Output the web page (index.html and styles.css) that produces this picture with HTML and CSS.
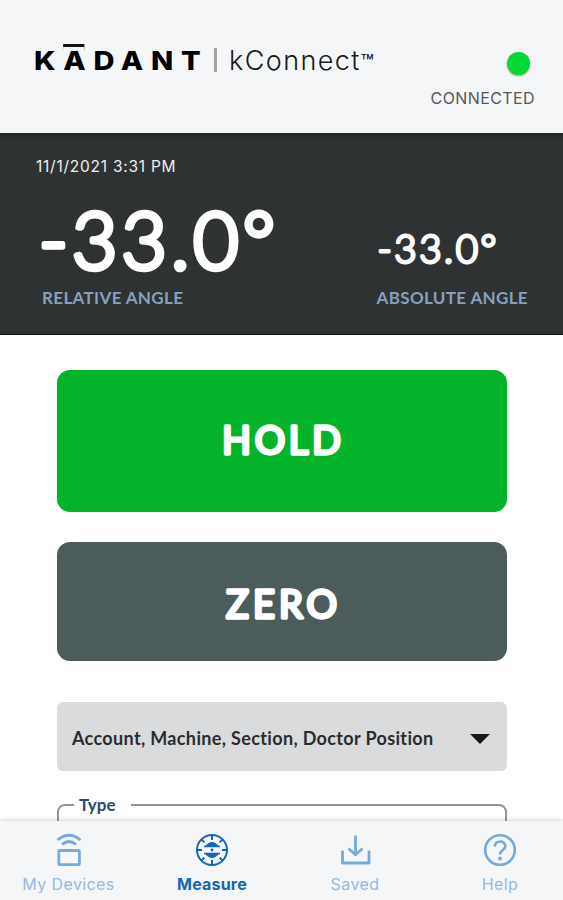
FILE: index.html
```html
<!DOCTYPE html>
<html lang="en">
<head>
    <meta charset="UTF-8">
    <meta name="viewport" content="width=device-width, initial-scale=1.0">
    <title>Kadant kConnect</title>
    <link rel="stylesheet" href="styles.css">
</head>
<body>
    <header class="header">
        <div class="logo">
            <span class="logo-name">K<span class="logo-a">Ā</span>DANT</span>
            <span class="logo-divider"></span>
            <span class="logo-product">kConnect<span class="logo-tm">™</span></span>
        </div>
        <div class="status">
            <span class="status-dot"></span>
            <span class="status-text">CONNECTED</span>
        </div>
    </header>

    <section class="readings">
        <div class="date">11/1/2021 3:31 PM</div>
        <div class="angles">
            <div class="angle">
                <svg class="relative-value" width="250" height="100" viewBox="0 0 250 100">
                    <text x="3" y="79" textLength="236">-33.0°</text>
                </svg>
                <span class="angle-label relative-label">RELATIVE ANGLE</span>
            </div>
            <div class="angle">
                <svg class="absolute-value" width="130" height="54" viewBox="0 0 130 54">
                    <text x="0.5" y="40" textLength="119">-33.0°</text>
                </svg>
                <span class="angle-label absolute-label">ABSOLUTE ANGLE</span>
            </div>
        </div>
    </section>

    <main class="content">
        <button class="button hold">
            <svg width="134" height="54" viewBox="0 0 134 54"><text x="7" y="40" textLength="119">HOLD</text></svg>
        </button>
        <button class="button zero">
            <svg width="134" height="54" viewBox="0 0 134 54"><text x="11" y="43" textLength="111">ZERO</text></svg>
        </button>
        <div class="select">
            <span class="select-text">Account, Machine, Section, Doctor Position</span>
            <span class="arrow"></span>
        </div>
        <fieldset class="field">
            <legend><span>Type</span></legend>
        </fieldset>
    </main>

    <nav class="nav">
        <a class="nav-item devices">
            <svg width="34" height="34" viewBox="0 0 34 34" fill="none" stroke="currentColor" stroke-width="2.8">
                <path d="M5.5 7Q17 -2.5 28.5 7M10 11.5Q17 5.5 24 11.5"/>
                <rect x="6.8" y="17.5" width="20.6" height="14.2" rx="1"/>
            </svg>
            <span>My Devices</span>
        </a>
        <a class="nav-item measure active">
            <svg width="34" height="34" viewBox="0 0 34 34" fill="none" stroke="currentColor" stroke-width="2">
                <circle cx="17" cy="17" r="15"/>
                <path d="M17 2v5M17 27v5M2 17h5M27 17h5M6.4 6.4l3 3M24.6 24.6l3 3M27.6 6.4l-3 3M9.4 24.6l-3 3"/>
                <path d="M9.5 13.8Q17 4.2 24.5 13.8ZM9.5 20.2Q17 29.8 24.5 20.2Z" fill="currentColor" stroke="none"/>
                <path d="M9 13.5h16M9 20.5h16" stroke-width="1.4"/>
                <circle cx="17" cy="17" r="1.4" fill="currentColor" stroke="none"/>
            </svg>
            <span>Measure</span>
        </a>
        <a class="nav-item saved">
            <svg width="34" height="34" viewBox="0 0 34 34" fill="none" stroke="currentColor" stroke-width="2.8" stroke-linejoin="round">
                <path d="M17.5 2.5v18.5M10.5 15.5l7 6.3 7-6.3M4.5 17.5v12.5h26.5V17.5"/>
            </svg>
            <span>Saved</span>
        </a>
        <a class="nav-item help">
            <svg width="34" height="34" viewBox="0 0 34 34" fill="none" stroke="currentColor" stroke-width="2.6">
                <circle cx="17" cy="17" r="14.8"/>
                <path d="M11.8 13.6C12 6.8 22.3 7 22.3 13.2C22.3 17 17 17.2 17 21.5"/>
                <circle cx="17" cy="25.5" r="1.9" fill="currentColor" stroke="none"/>
            </svg>
            <span>Help</span>
        </a>
    </nav>
</body>
</html>
```

FILE: styles.css
```css
* {
    box-sizing: border-box;
}

body {
    margin: 0;
    height: 900px;
    display: flex;
    flex-direction: column;
    overflow: hidden;
    background-color: #ffffff;
    font-family: 'Lato', sans-serif;
    white-space: nowrap;
}

/* Header */
.header {
    flex: none;
    height: 133px;
    padding: 39px 28px 0 34px;
    display: flex;
    justify-content: space-between;
    background-color: #f4f6f8;
}

.logo {
    height: 42px;
    display: flex;
    align-items: center;
    font-family: 'Inter', sans-serif;
}

.logo-name {
    width: 155px;
    margin-right: 25px;
    font-size: 26px;
    font-weight: 800;
    letter-spacing: 6.9px;
    color: #000000;
    transform: scaleX(1.12); /* Extended letters */
    transform-origin: left;
}

.logo-a {
    position: relative;
}

/* Wide bar over the A, in place of the short macron */
.logo-a::before {
    content: "";
    position: absolute;
    left: 0;
    top: -1px;
    width: 19px;
    height: 3px;
    background-color: #111111;
    border-bottom: 3px solid #f4f6f8;
}

.logo-divider {
    width: 3px;
    height: 24px;
    background-color: #a2a4a6;
}

.logo-product {
    margin-left: 12px;
    font-size: 27px;
    font-weight: 300;
    letter-spacing: 1.4px;
    color: #17191a;
}

.logo-tm {
    font-size: 21px;
    font-weight: 500;
    letter-spacing: 0;
}

.status {
    display: flex;
    flex-direction: column;
    align-items: flex-end;
}

.status-dot {
    width: 23px;
    height: 23px;
    margin: 13px 5px 0 0;
    border-radius: 50%;
    background-color: #05d834;
    box-shadow: 0 1px 2px rgba(0, 0, 0, 0.35);
}

.status-text {
    margin-top: 13px;
    font-family: 'Inter', sans-serif;
    font-size: 16px;
    line-height: 20px;
    letter-spacing: 0.4px;
    color: #56595b;
}

/* Angle readings */
.readings {
    flex: none;
    height: 202px;
    padding: 24px 35px 0 36px;
    background: linear-gradient(#222626, #2e3232 8px);
    border-bottom: 1px solid #101313;
}

.date {
    font-family: 'Inter', sans-serif;
    font-size: 15.5px;
    line-height: 20px;
    letter-spacing: 0.75px;
    color: #eeeeee;
}

.angles {
    display: flex;
    justify-content: space-between;
    align-items: flex-end;
    margin-top: 13px;
}

.angle {
    display: flex;
    flex-direction: column;
}

.angle text,
.button text {
    fill: #ffffff;
    stroke: #ffffff;
    stroke-linejoin: round;
}

.relative-value {
    font-size: 78px;
    font-weight: 300;
    stroke-width: 5.5px;
}

.absolute-value {
    margin-bottom: 11px;
    font-size: 38.5px;
    font-weight: 300;
    stroke-width: 2.9px;
}

.angle-label {
    font-size: 17px;
    font-weight: 700;
    line-height: 20px;
    letter-spacing: 0.35px;
    color: #86a1bf;
}

.relative-label {
    margin-left: 6px;
    margin-top: -2px;
}

/* Buttons and fields */
.content {
    flex: 1;
    min-height: 0;
    padding: 35px 56px 0 57px;
    display: flex;
    flex-direction: column;
    overflow: hidden;
}

.button {
    flex: none;
    padding: 0;
    display: flex;
    align-items: center;
    justify-content: center;
    border: none;
    border-radius: 13px;
    font-family: inherit;
    font-size: 38px;
    font-weight: 400;
    stroke-width: 3.3px;
}

.hold {
    height: 142px;
    background-color: #03b32a;
}

.zero {
    height: 119px;
    margin-top: 30px;
    background-color: #4c5c5b;
}

.select {
    flex: none;
    height: 69px;
    margin-top: 41px;
    padding: 2px 17px 0 15px;
    display: flex;
    align-items: center;
    justify-content: space-between;
    border-radius: 6px;
    background-color: #dadbdd;
}

.select-text {
    font-size: 18px;
    font-weight: 700;
    letter-spacing: 0.35px;
    color: #2a2c2f;
}

.arrow {
    margin-top: 3px;
    border-left: 10px solid transparent;
    border-right: 10px solid transparent;
    border-top: 10px solid #17191b;
}

.field {
    flex: none;
    height: 90px;
    margin: 24px 0 0;
    padding: 0 0 0 15px;
    border: 2px solid #929495;
    border-radius: 8px;
}

.field legend {
    width: 57px;
    padding: 0 0 0 5px;
    font-size: 17px;
    font-weight: 700;
    line-height: 20px;
    color: #2a4772;
}

/* Bottom navigation */
.nav {
    flex: none;
    height: 79px;
    display: flex;
    position: relative;
    background-color: #f4f6f8;
    box-shadow: 0 -1px 4px rgba(0, 0, 0, 0.18);
}

.nav-item {
    flex: none;
    padding-top: 12px;
    display: flex;
    flex-direction: column;
    align-items: center;
    font-family: 'Inter', sans-serif;
    font-size: 16px;
    line-height: 20px;
    letter-spacing: 0.4px;
    color: #76aada;
}

.nav-item span {
    margin-top: 7px;
    color: #94bade;
}

.nav-item.active,
.nav-item.active span {
    color: #1766b5;
    font-weight: 700;
    letter-spacing: 0.2px;
}

.devices {
    width: 137px;
}

.measure {
    width: 150px;
}

.saved {
    width: 136px;
}

.help {
    width: 140px;
    padding-left: 14px;
}
```
